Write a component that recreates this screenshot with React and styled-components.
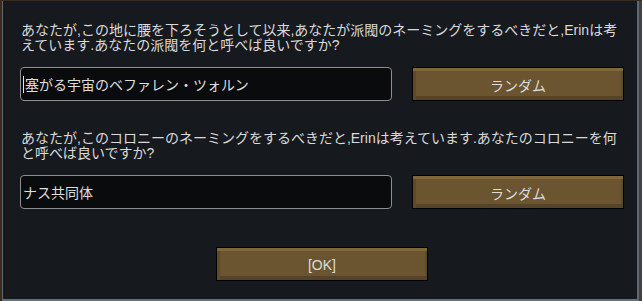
import styled, { createGlobalStyle } from 'styled-components';

const GlobalStyle = createGlobalStyle`
  html, body {
    margin: 0;
    padding: 0;
    background: #3b2b1f;
  }
  body {
    font-family: "Liberation Sans", "Noto Sans CJK JP", sans-serif;
  }
`;

function App() {
  return (
    <Frame>
      <GlobalStyle />
      <Panel>
        <Section>
          <Prompt>
            あなたが,この地に腰を下ろそうとして以来,あなたが派閥のネーミングをするべきだと,Erinは考えています.あなたの派閥を何と呼べば良いですか?
          </Prompt>
          <Row>
            <NameField>
              <Caret />
              塞がる宇宙のベファレン・ツォルン
            </NameField>
            <BevelButton>ランダム</BevelButton>
          </Row>
        </Section>
        <Section>
          <Prompt>
            あなたが,このコロニーのネーミングをするべきだと,Erinは考えています.あなたのコロニーを何と呼べば良いですか?
          </Prompt>
          <Row>
            <NameField>ナス共同体</NameField>
            <BevelButton>ランダム</BevelButton>
          </Row>
        </Section>
        <Footer>
          <BevelButton>[OK]</BevelButton>
        </Footer>
      </Panel>
      <Edge />
    </Frame>
  );
}

export default App;

const Frame = styled.div`
  width: 642px;
  height: 301px;
  box-sizing: border-box;
  padding: 1px 0 0 2px;
  display: flex;
  overflow: hidden;
`;

const Panel = styled.div`
  width: 637px;
  box-sizing: border-box;
  background: #16191e;
  border-left: 1px solid #5e666f;
  border-right: 2px solid #5e666f;
  border-bottom: 2px solid #66717c;
  padding: 22px 13px 0 17px;
  display: flex;
  flex-direction: column;
`;

const Edge = styled.div`
  width: 3px;
  background: #3d4247;
`;

const Section = styled.div`
  display: flex;
  flex-direction: column;
  gap: 14px;
  margin-bottom: 30px;
`;

const Prompt = styled.div`
  color: #dadada;
  font-size: 14px;
  line-height: 15px;
  padding-left: 1px;
`;

const Row = styled.div`
  display: flex;
  gap: 20px;
`;

const NameField = styled.div`
  width: 372px;
  height: 34px;
  box-sizing: border-box;
  border: 1px solid #8e8e8e;
  border-radius: 4px;
  background: #0a0b0d;
  color: #dedede;
  font-size: 14px;
  display: flex;
  align-items: center;
  padding-left: 2px;
`;

const Caret = styled.span`
  display: inline-block;
  width: 1px;
  height: 17px;
  background: #e6e6e6;
  margin-right: 1px;
`;

const BevelButton = styled.div`
  width: 212px;
  height: 34px;
  box-sizing: border-box;
  background: #6b5531;
  border: 1px solid #000;
  box-shadow:
    inset 0 3px 0 #7f673b,
    inset 3px 0 0 #5e4a2c,
    inset 0 -4px 0 #55432a,
    inset -2px 0 0 #5e4a2c;
  color: #dcdcdc;
  font-size: 14px;
  display: flex;
  align-items: center;
  justify-content: center;
  padding-top: 1px;
`;

const Footer = styled.div`
  display: flex;
  justify-content: center;
  margin-top: 8px;
`;
